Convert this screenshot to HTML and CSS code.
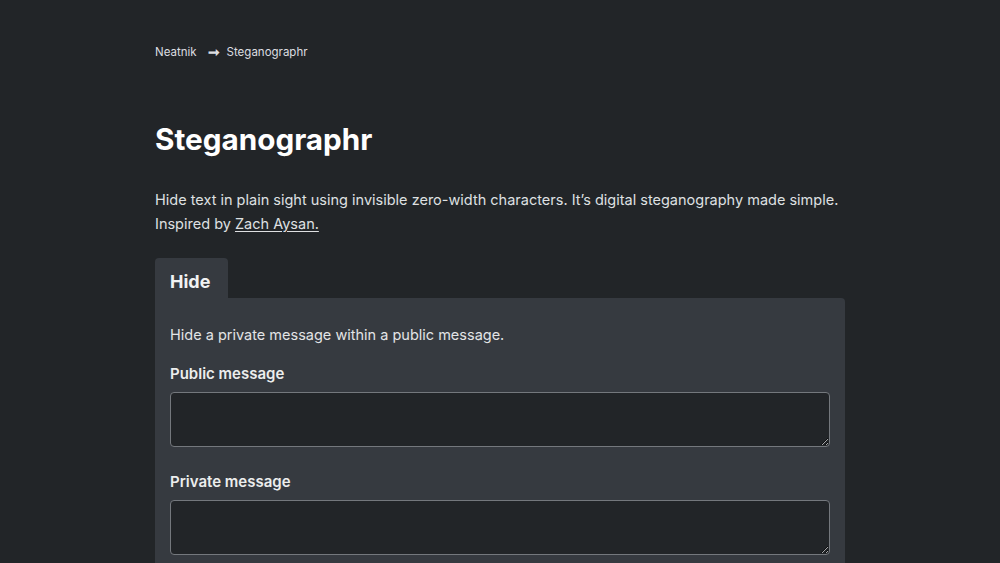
FILE: index.html
```html
<!DOCTYPE html>
<html lang="en">
<head>
<meta charset="utf-8">
<title>Steganographr</title>
<link rel="stylesheet" href="styles.css">
</head>
<body>
<main class="wrap">
  <nav class="crumbs">
    <a href="#">Neatnik</a>
    <span class="arrow">➞</span>
    <span>Steganographr</span>
  </nav>
  <h1 class="title">Steganographr</h1>
  <p class="intro">Hide text in plain sight using invisible zero-width characters. It’s digital steganography made simple. Inspired by <a href="#" class="link">Zach Aysan.</a></p>
  <div class="tabs">
    <div class="tab">Hide</div>
  </div>
  <section class="panel">
    <p class="panel-desc">Hide a private message within a public message.</p>
    <label class="label">Public message</label>
    <textarea class="field"></textarea>
    <label class="label second">Private message</label>
    <textarea class="field"></textarea>
  </section>
</main>
</body>
</html>
```
FILE: styles.css
```css
* { box-sizing: border-box; }
html, body { margin: 0; padding: 0; }
body {
  background: #222528;
  color: #e6e7e8;
  font-family: Inter, "Noto Sans", sans-serif;
}
.wrap {
  width: 690px;
  margin: 0 auto;
  padding-top: 43px;
}
.crumbs {
  font-size: 11.5px;
  line-height: 18px;
  display: flex;
  align-items: center;
  color: #dcdde0;
}
.crumbs a { color: #dcdde0; text-decoration: none; }
.arrow {
  font-size: 14px;
  font-weight: 700;
  margin: 0 7px 0 11px;
  line-height: 18px;
}
.title {
  margin: 60px 0 0;
  font-size: 29.7px;
  line-height: 36px;
  font-weight: 700;
  color: #ffffff;
}
.intro {
  margin: 31px 0 0;
  font-size: 14.5px;
  line-height: 24px;
  color: #dfe0e2;
}
.link { color: #dfe0e2; text-decoration: underline; text-underline-offset: 2px; }
.tabs { display: flex; margin-top: 22px; }
.tab {
  background: #363a40;
  padding: 0 18px 0 15px;
  height: 40px;
  line-height: 47px;
  font-size: 18px;
  font-weight: 700;
  color: #f1f2f3;
  border-radius: 4px 4px 0 0;
}
.panel {
  background: #363a40;
  border-radius: 0 4px 0 0;
  padding: 25px 15px 10px 15px;
  display: flex;
  flex-direction: column;
}
.panel-desc {
  margin: 0;
  font-size: 14.5px;
  line-height: 24px;
  color: #e3e4e6;
}
.label {
  margin-top: 15px;
  font-size: 15px;
  line-height: 24px;
  font-weight: 600;
  color: #eceded;
}
.label.second { margin-top: 23px; }
.field {
  margin-top: 6px;
  height: 55px;
  background: #222528;
  border: 1px solid #74787d;
  border-radius: 4px;
  resize: vertical;
  color: #fff;
  font-family: inherit;
}
```
